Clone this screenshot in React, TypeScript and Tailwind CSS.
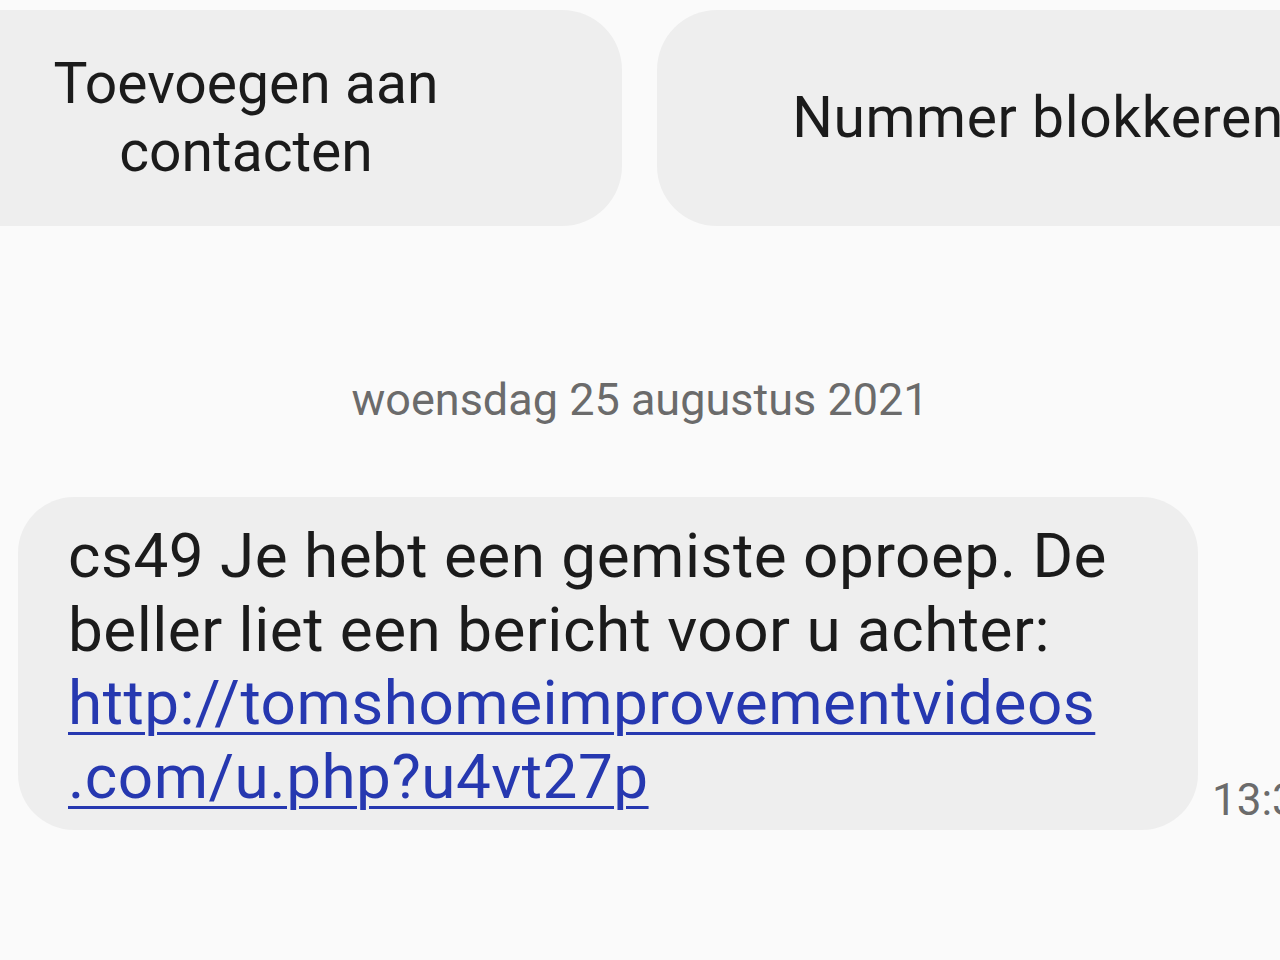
import React from "react";

const font = { fontFamily: "Roboto, 'Noto Sans', sans-serif" };

function ActionButton({ children, className }: any) {
  return (
    <div
      className={
        "flex h-[216px] w-[752px] shrink-0 items-center justify-center rounded-[60px] bg-[#eeeeee] text-center text-[57px] leading-[68px] text-[#1b1b1b] " +
        className
      }
    >
      {children}
    </div>
  );
}

export default function App() {
  return (
    <div
      className="h-[960px] w-[1280px] overflow-hidden bg-[#fafafa]"
      style={font}
    >
      <div className="flex gap-[35px] pt-[10px]">
        <ActionButton className="ml-[-130px]">
          <span>
            Toevoegen aan
            <br />
            contacten
          </span>
        </ActionButton>
        <ActionButton className="pl-[10px] tracking-[0.6px]">
          Nummer blokkeren
        </ActionButton>
      </div>

      <div className="mt-[149px] h-[50px] text-center text-[45px] leading-[50px] text-[#6b6b6b]">
        woensdag 25 augustus 2021
      </div>

      <div className="mt-[72px] flex items-end">
        <div className="ml-[18px] w-[1180px] shrink-0 whitespace-nowrap rounded-[56px] bg-[#eeeeee] pb-[17px] pl-[50px] pr-[20px] pt-[22px] text-[62px] leading-[73.5px] tracking-[0.5px] text-[#1b1b1b]">
          cs49 Je hebt een gemiste oproep. De
          <br />
          beller liet een bericht voor u achter:
          <br />
          <a
            href="#"
            className="text-[#2638b0] underline decoration-[3px] underline-offset-[8px]"
          >
            http://tomshomeimprovementvideos
            <br />
            .com/u.php?u4vt27p
          </a>
        </div>
        <div className="mb-[5px] ml-[14px] shrink-0 whitespace-nowrap text-[44px] leading-[50px] text-[#6b6b6b]">
          13:35
        </div>
      </div>
    </div>
  );
}
